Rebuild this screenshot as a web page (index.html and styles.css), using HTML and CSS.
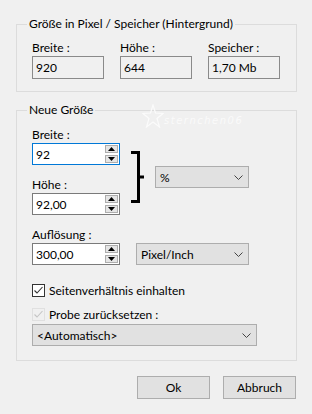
FILE: index.html
```html
<!DOCTYPE html>
<html lang="de">
<head>
<meta charset="utf-8">
<link rel="stylesheet" href="styles.css">
</head>
<body>
<div class="dialog">
  <section class="group g1">
    <div class="legend">Größe in Pixel / Speicher (Hintergrund)</div>
    <div class="info-row">
      <div class="field"><div class="lbl">Breite :</div><div class="ro">920</div></div>
      <div class="field"><div class="lbl">Höhe :</div><div class="ro">644</div></div>
      <div class="field"><div class="lbl">Speicher :</div><div class="ro">1,70 Mb</div></div>
    </div>
  </section>

  <section class="group g2">
    <div class="legend">Neue Größe</div>
    <div class="wm">
      <svg class="wm-star" width="22" height="24" viewBox="0 0 22 24"><path d="M11 1 L13.5 9 L21 9.5 L15 14.5 L17.5 23 L11 18 L4.5 23 L7 14.5 L1 9.5 L8.5 9 Z" fill="none" stroke="#fbfbfb" stroke-width="1.2"/></svg>
      <span class="wm-text">sternchen06</span>
    </div>
    <div class="size-row">
      <div class="size-col">
        <div class="lbl">Breite :</div>
        <div class="spin focus"><span>92</span>
          <div class="arrows">
            <div class="arr"><svg width="7" height="4" viewBox="0 0 7 4"><path d="M0 4 L3.5 0 L7 4 Z" fill="#000"/></svg></div>
            <div class="arr"><svg width="7" height="4" viewBox="0 0 7 4"><path d="M0 0 L3.5 4 L7 0 Z" fill="#000"/></svg></div>
          </div>
        </div>
        <div class="lbl gap">Höhe :</div>
        <div class="spin"><span>92,00</span>
          <div class="arrows">
            <div class="arr"><svg width="7" height="4" viewBox="0 0 7 4"><path d="M0 4 L3.5 0 L7 4 Z" fill="#000"/></svg></div>
            <div class="arr"><svg width="7" height="4" viewBox="0 0 7 4"><path d="M0 0 L3.5 4 L7 0 Z" fill="#000"/></svg></div>
          </div>
        </div>
      </div>
      <svg class="bracket" width="15" height="86" viewBox="0 0 15 86"><path d="M0 25.5 H7.5 V74.5 H0 M7.5 50 H13" fill="none" stroke="#000" stroke-width="3"/></svg>
      <div class="select pct"><span>%</span>
        <svg class="chev" width="9" height="5" viewBox="0 0 9 5"><path d="M0.5 0.5 L4.5 4.5 L8.5 0.5" fill="none" stroke="#444" stroke-width="1"/></svg>
      </div>
    </div>

    <div class="lbl gap">Auflösung :</div>
    <div class="res-row">
      <div class="spin"><span>300,00</span>
        <div class="arrows">
          <div class="arr"><svg width="7" height="4" viewBox="0 0 7 4"><path d="M0 4 L3.5 0 L7 4 Z" fill="#000"/></svg></div>
          <div class="arr"><svg width="7" height="4" viewBox="0 0 7 4"><path d="M0 0 L3.5 4 L7 0 Z" fill="#000"/></svg></div>
        </div>
      </div>
      <div class="select unit"><span>Pixel/Inch</span>
        <svg class="chev" width="9" height="5" viewBox="0 0 9 5"><path d="M0.5 0.5 L4.5 4.5 L8.5 0.5" fill="none" stroke="#444" stroke-width="1"/></svg>
      </div>
    </div>

    <div class="check c1">
      <svg class="box" width="13" height="13" viewBox="0 0 13 13"><rect x="0.5" y="0.5" width="12" height="12" fill="#fff" stroke="#333"/><path d="M2.5 6.5 L5 9 L10.5 3" fill="none" stroke="#333" stroke-width="1.1"/></svg>
      <span>Seitenverhältnis einhalten</span>
    </div>
    <div class="check c2">
      <svg class="box" width="13" height="13" viewBox="0 0 13 13"><rect x="0.5" y="0.5" width="12" height="12" fill="#f0f0f0" stroke="#e0e0e0"/><path d="M2.5 6.5 L5 9 L10.5 3" fill="none" stroke="#c4c4c4" stroke-width="1.1"/></svg>
      <span>Probe zurücksetzen :</span>
    </div>
    <div class="select auto"><span>&lt;Automatisch&gt;</span>
      <svg class="chev" width="9" height="5" viewBox="0 0 9 5"><path d="M0.5 0.5 L4.5 4.5 L8.5 0.5" fill="none" stroke="#444" stroke-width="1"/></svg>
    </div>
  </section>

  <div class="buttons">
    <button class="btn">Ok</button>
    <button class="btn">Abbruch</button>
  </div>
</div>
</body>
</html>
```
FILE: styles.css
```css
html, body {
  margin: 0;
  padding: 0;
}
body {
  width: 312px;
  height: 414px;
  background: #f0f0f0;
  font-family: Lato, "Noto Sans", sans-serif;
  font-size: 12px;
  color: #000;
  overflow: hidden;
}
.dialog {
  padding-top: 24px;
}
.group {
  box-sizing: border-box;
  width: 281px;
  margin-left: 16px;
  border: 1px solid #dcdcdc;
  padding: 0 15px 12px 15px;
  position: relative;
}
.legend {
  width: fit-content;
  margin: -9px 0 0 -5px;
  padding: 0 2px;
  height: 16px;
  line-height: 16px;
  background: #f0f0f0;
}
.lbl {
  line-height: 15px;
  height: 15px;
}
.info-row {
  display: flex;
  gap: 16px;
  margin-top: 8px;
}
.ro {
  box-sizing: border-box;
  width: 72px;
  height: 23px;
  border: 1px solid #8a8a8a;
  padding-left: 3px;
  line-height: 21px;
  margin-top: 1px;
}
.g2 {
  margin-top: 18px;
  padding-bottom: 14px;
}
.size-row {
  display: flex;
  align-items: flex-start;
  margin-top: 9px;
}
.size-col {
  width: 88px;
}
.gap {
  margin-top: 12px;
}
.spin {
  box-sizing: border-box;
  width: 88px;
  height: 22px;
  border: 1px solid #7a7a7a;
  background: #fff;
  display: flex;
  align-items: center;
  padding-left: 3px;
  margin-top: 1px;
}
.spin.focus {
  border-color: #0078d7;
}
.arrows {
  margin-left: auto;
  margin-right: 1px;
  display: flex;
  flex-direction: column;
  gap: 2px;
}
.arr {
  box-sizing: border-box;
  width: 13px;
  height: 8px;
  border: 1px solid #adadad;
  background: #e5e5e5;
  display: flex;
  align-items: center;
  justify-content: center;
}
.arr svg {
  display: block;
}
.bracket {
  display: block;
  margin-left: 11px;
}
.select {
  box-sizing: border-box;
  height: 22px;
  border: 1px solid #adadad;
  background: #e1e1e1;
  display: flex;
  align-items: center;
  padding: 0 5px 0 4px;
}
.select span {
  flex: 1;
}
.chev {
  display: block;
}
.pct {
  width: 94px;
  margin-left: 9px;
  margin-top: 39px;
}
.res-row {
  display: flex;
  gap: 16px;
}
.unit {
  width: 113px;
  margin-top: 1px;
}
.check {
  display: flex;
  align-items: center;
  gap: 4px;
  height: 15px;
}
.box {
  display: block;
}
.c1 {
  margin-top: 18px;
}
.c2 {
  margin-top: 9px;
}
.auto {
  width: 225px;
  margin-top: 2px;
}
.wm {
  position: absolute;
  left: 125px;
  top: -7px;
  display: flex;
  align-items: flex-end;
  pointer-events: none;
}
.wm-star {
  display: block;
}
.wm-text {
  font-family: "DejaVu Sans", sans-serif;
  font-style: italic;
  font-size: 10px;
  letter-spacing: 1.5px;
  color: #fafafa;
  line-height: 12px;
  margin-bottom: 1px;
}
.buttons {
  display: flex;
  justify-content: flex-end;
  gap: 13px;
  margin: 15px 16px 0 0;
}
.btn {
  box-sizing: border-box;
  width: 73px;
  height: 23px;
  border: 1px solid #adadad;
  background: #e1e1e1;
  font-family: inherit;
  font-size: 12px;
  color: #000;
  padding: 0;
  margin: 0;
}
```
